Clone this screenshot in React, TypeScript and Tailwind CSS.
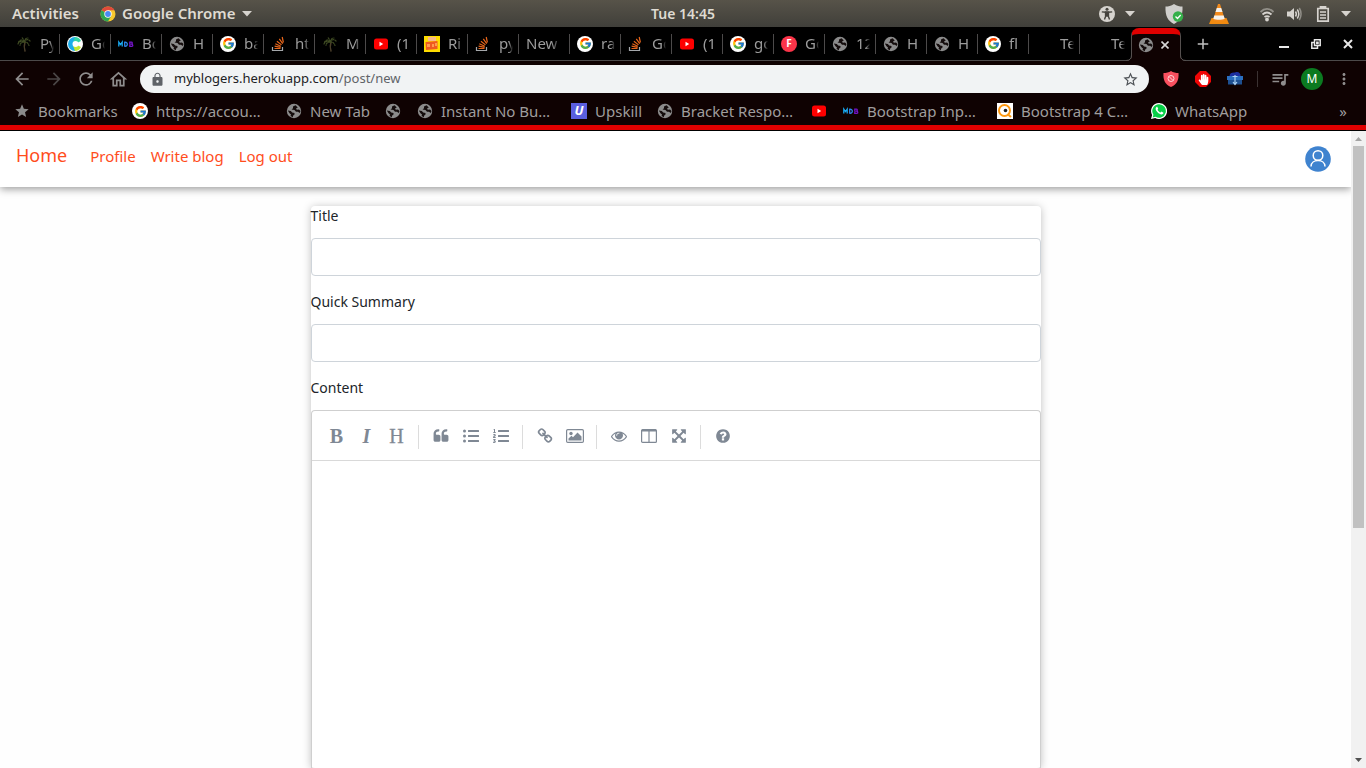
import type { ReactNode } from 'react';
import { FcGoogle } from 'react-icons/fc';
import { FaListUl, FaListOl, FaHandPaper } from 'react-icons/fa';
import {
  MdArrowBack, MdArrowForward, MdRefresh, MdOutlineHome, MdLock, MdStarBorder, MdStar,
  MdMoreVert, MdAdd, MdQueueMusic,
} from 'react-icons/md';

const Globe = () => (
  <svg viewBox="0 0 16 16" className="size-4">
    <circle cx="8" cy="8" r="7.200" fill="#8b8b8b" />
    <path d="M9.500 2.200L7 3.500v1.700L5.500 6.500l3 .5 1.500 1.800h2l1.600 1.200 1-2-1.600-1.500-2.200.3-.8-1.300 1.800-1z" fill="#140c0c" />
    <path d="M1.800 7.500l3 .5 1.400 1.500 2.300.4v1.600L7 12.700v1.500L4.500 13l.5-1.500-1.500-1.300z" fill="#140c0c" />
  </svg>
);

const Google = () => (
  <span className="flex size-4 items-center justify-center rounded-full bg-white">
    <FcGoogle className="size-[13px]" />
  </span>
);

const Palm = () => (
  <svg viewBox="0 0 16 16" className="size-4" fill="none" stroke="#3e4a22" strokeWidth="1.2" strokeLinecap="round">
    <path d="M9 15c-1-3-1-6 0-9" stroke="#4b3f2a" strokeWidth="1.5" />
    <path d="M8 6C6 3 4 4 2.500 6M8 6C5 6 4 8 4 9.500M8 6c2-3 4-3 6-1M8 6c3 0 4 1 5 3.500M8 6C7 3 7 2 5.500 1.500M8 6c1-3 2-4 4-4M8 6C5 5 3 5 2 8" strokeDasharray="1.600 1.300" />
  </svg>
);

const StackOverflow = () => (
  <svg viewBox="0 0 16 16" className="size-4" fill="none" strokeWidth="1.2">
    <path d="M1.500 11V14.500H11.500V11" stroke="#a5a8ab" />
    <path d="M3.500 12.500h6M3.600 10.200l6 1.100M4.300 7.700l5.500 2.500M5.900 5.200l4.600 3.700M8.300 2.900l3.400 4.800M11.200 1l1.200 5.500" stroke="#e8661b" />
  </svg>
);

const YouTube = () => (
  <svg viewBox="0 0 16 16" className="size-4">
    <rect x="1" y="2.500" width="14" height="11" rx="2.500" fill="#f00" />
    <path d="M6.500 5.800v4.400L10.200 8z" fill="#fff" />
  </svg>
);

const Mdb = () => (
  <svg viewBox="0 0 16 16" className="size-4" fill="none" strokeWidth="1.300">
    <path d="M.800 10.500V6l1.700 2.500L4.200 6v4.500" stroke="#18a8f0" />
    <path d="M6.700 6.200v4c3.500 .5 3.500-4.500 0-4z" stroke="#2a86e8" />
    <path d="M11.800 6.200v4.200h2c1.500-.4 1.200-2-.2-2.200 1-.4 1-2-.3-2z" stroke="#7414c8" />
  </svg>
);

const Swirl = () => (
  <svg viewBox="0 0 16 16" className="size-4">
    <circle cx="8" cy="8" r="8" fill="#fff" />
    <path d="M8 1a7 7 0 0 0 0 14z" fill="#1badea" />
    <path d="M8 1a7 7 0 0 1 6 4l-3 1.500H6z" fill="#35d6a4" />
    <path d="M8 15a7 7 0 0 0 6-4l-3-1.500H6z" fill="#c2e830" />
    <circle cx="8.500" cy="8" r="3" fill="#fff" />
  </svg>
);

const Movie = () => (
  <svg viewBox="0 0 16 16" className="size-4">
    <path d="M0 0h16v16H0z" fill="#ffdc00" />
    <path d="M4 1h8v4H4z" fill="#f6b98b" />
    <path d="M1.500 6l12-1v8L2 14z" fill="#ef5a20" />
    <path d="M3 8h3v3H3zM8 8h2v3H8zM11 7h2v3h-2z" fill="#ff9a50" />
  </svg>
);

const LetterF = () => (
  <span className="flex size-4 items-center justify-center rounded-full bg-[#fb3449] text-[10px] font-bold text-white">F</span>
);

const LetterU = () => (
  <span className="flex size-4 items-center justify-center bg-[#5a5fe0] text-[13px] font-bold italic text-white">U</span>
);

const QIcon = () => (
  <svg viewBox="0 0 16 16" className="size-4">
    <path d="M0 0h16v16H0z" fill="#fff" />
    <circle cx="7.500" cy="7.500" r="5.500" fill="none" stroke="#ff9810" strokeWidth="2" />
    <path d="M10.500 11l3.500 3" stroke="#ff9810" strokeWidth="2.200" />
    <circle cx="8.500" cy="7.500" r="1.800" fill="#222" />
  </svg>
);

const WhatsApp = () => (
  <svg viewBox="0 0 16 16" className="size-4">
    <path d="M8 0a8 8 0 1 1-3.800 15L0 16l1.100-4A8 8 0 0 1 8 0z" fill="#fff" />
    <path d="M8 1.200a6.800 6.800 0 1 1-3.500 12.600L1.700 14.400l.7-2.700A6.800 6.800 0 0 1 8 1.200z" fill="#08d048" />
    <path d="M5.500 4c-1.500 1-1 3.200 1 5.200s4.300 3.100 5.700 1.400c.4-.6.3-1-.2-1.200l-1.500-.8-1 1C8.400 9.200 7.200 8.200 6.500 6.700l.7-.9-.7-1.600c-.2-.4-.6-.4-1-.2z" fill="#fff" />
  </svg>
);

const Chrome = () => (
  <svg viewBox="0 0 16 16" className="size-4">
    <circle cx="8" cy="8" r="7.500" fill="#f7c92e" />
    <path d="M8 8L1.500 4.250A7.500 7.500 0 0 1 14.500 4.250H8z" fill="#e04a3a" />
    <path d="M8 8L1.500 4.250A7.500 7.500 0 0 0 8 15.500L11.200 9.900z" fill="#2fa552" />
    <circle cx="8" cy="8" r="3.700" fill="#fff" />
    <circle cx="8" cy="8" r="2.900" fill="#4a8af4" />
  </svg>
);

const Caret = () => (
  <svg viewBox="0 0 10 6" className="h-[6px] w-[10px]" fill="#d6d3ce"><path d="M0 0h10L5 5.500z" /></svg>
);

type Tab = { icon?: ReactNode; text: string; bare?: boolean };
const tabs: Tab[] = [
  { icon: <Palm />, text: 'Py' },
  { icon: <Swirl />, text: 'Go' },
  { icon: <Mdb />, text: 'Bo' },
  { icon: <Globe />, text: 'H' },
  { icon: <Google />, text: 'ba' },
  { icon: <StackOverflow />, text: 'ht' },
  { icon: <Palm />, text: 'M' },
  { icon: <YouTube />, text: '(1' },
  { icon: <Movie />, text: 'Ri' },
  { icon: <StackOverflow />, text: 'py' },
  { text: 'New', bare: true },
  { icon: <Google />, text: 'ra' },
  { icon: <StackOverflow />, text: 'Go' },
  { icon: <YouTube />, text: '(1' },
  { icon: <Google />, text: 'go' },
  { icon: <LetterF />, text: 'Go' },
  { icon: <Globe />, text: '12' },
  { icon: <Globe />, text: 'H' },
  { icon: <Globe />, text: 'H' },
  { icon: <Google />, text: 'fl' },
  { text: 'Te' },
  { text: 'Te' },
];

const bookmarks: { icon: ReactNode; text: string; width: string }[] = [
  { icon: <MdStar className="size-4 text-[#8b8b8b]" />, text: 'Bookmarks', width: 'w-[118px]' },
  { icon: <Google />, text: 'https://accou…', width: 'w-[154px]' },
  { icon: <Globe />, text: 'New Tab', width: 'w-[99px]' },
  { icon: <Globe />, text: '', width: 'w-8' },
  { icon: <Globe />, text: 'Instant No Bu…', width: 'w-[154px]' },
  { icon: <LetterU />, text: 'Upskill', width: 'w-[86px]' },
  { icon: <Globe />, text: 'Bracket Respo…', width: 'w-[154px]' },
  { icon: <YouTube />, text: '', width: 'w-8' },
  { icon: <Mdb />, text: 'Bootstrap Inp…', width: 'w-[154px]' },
  { icon: <QIcon />, text: 'Bootstrap 4 C…', width: 'w-[154px]' },
  { icon: <WhatsApp />, text: 'WhatsApp', width: 'w-[118px]' },
];

function SystemBar() {
  return (
    <header className="grid h-[27px] shrink-0 grid-cols-[1fr_auto_1fr] items-center bg-linear-to-b from-[#575349] to-[#403f3a] text-[15px] font-semibold text-[#dfdbd2]">
      <div className="flex items-center pl-3">
        <button className="w-[88px] text-left">Activities</button>
        <button className="flex items-center gap-[6px]">
          <Chrome />
          <span>Google Chrome</span>
          <Caret />
        </button>
      </div>
      <time className="text-[14px]">Tue 14:45</time>
      <div className="flex items-center justify-end pr-[15px]">
        <svg viewBox="0 0 16 16" className="size-4">
          <circle cx="8" cy="8" r="8" fill="#d6d3ce" />
          <circle cx="8" cy="3.300" r="1.500" fill="#45433d" />
          <path d="M2.800 5.800l4 .5h2.400l4-.5M6.800 6.300v3.500L5.500 13.500M9.200 6.300v3.500l1.300 3.700M6.500 6h3v4h-3z" stroke="#45433d" strokeWidth="1.300" fill="#45433d" />
        </svg>
        <span className="ml-[10px]"><Caret /></span>
        <svg viewBox="0 0 20 20" className="ml-[29px] size-5">
          <path d="M10 0c3 2 5.500 2.500 8.500 2.500C19 12 16 17 10 20 4 17 1 12 1.500 2.500 4.500 2.500 7 2 10 0z" fill="#d0cfcc" />
          <circle cx="14" cy="12.500" r="5.200" fill="#36b04a" />
          <path d="M11.500 12.500l2 2 3.200-3.500" fill="none" stroke="#fff" strokeWidth="1.300" />
        </svg>
        <svg viewBox="0 0 20 22" className="ml-[25px] h-[22px] w-5">
          <path d="M2.500 15h15L20 21H0z" fill="#f08a10" />
          <path d="M9 1h2l5 16c-3 2-9 2-12 0z" fill="#f28a1c" />
          <path d="M7.800 5h4.400l1.300 4h-7zM5.300 12.500h9.400l1 3.200c-3 1.500-8.400 1.500-11.400 0z" fill="#f4f1ec" />
        </svg>
        <svg viewBox="0 0 16 16" className="ml-[30px] size-4" fill="none" stroke="#d6d3ce" strokeWidth="1.800">
          <path d="M1.500 6c4-4 9-4 13 0" opacity=".5" />
          <path d="M3.500 8.500c3-2.700 6-2.700 9 0M5.500 11c2-1.500 3-1.500 5 0" />
          <circle cx="8" cy="13.500" r="1" fill="#d6d3ce" />
        </svg>
        <svg viewBox="0 0 16 16" className="ml-[11px] size-4" fill="none" stroke="#d6d3ce" strokeWidth="1.500">
          <path d="M1 5.500h3L8 2v12l-4-3.500H1z" fill="#d6d3ce" stroke="none" />
          <path d="M9.500 5.500q1.700 2.500 0 5M11.300 3.500q3 4.500 0 9" />
          <path d="M13.300 2q3.500 6 0 12" opacity=".5" />
        </svg>
        <svg viewBox="0 0 14 16" className="ml-[14px] h-4 w-[14px]" fill="none" stroke="#d6d3ce" strokeWidth="1.700">
          <path d="M4.500 2V.800h5V2M1.800 2.500h10.400v12.700H1.800zM4 6h6M4 9h6M4 12h6" />
        </svg>
        <span className="ml-[11px]"><Caret /></span>
      </div>
    </header>
  );
}

function TabStrip() {
  return (
    <div className="flex h-[34px] shrink-0 bg-black">
      <div className="w-[9px] border-b border-[#4c4a4a]" />
      {tabs.map((tab, i) => (
        <button key={i} className="flex w-[51px] items-center border-b border-[#4c4a4a]">
          <span className={'flex h-5 w-full items-center pl-[7px] text-[15px] text-[#9c9c9c] ' + (i < 21 ? 'border-r border-[#4c4a4a]' : '')}>
            {!tab.bare && <span className="mr-2 flex size-4 shrink-0 items-center justify-center">{tab.icon}</span>}
            <span className={(tab.bare ? 'w-9' : 'w-[14px]') + ' overflow-hidden whitespace-nowrap text-left mask-r-from-70% mask-r-to-100%'}>{tab.text}</span>
          </span>
        </button>
      ))}
      <div className="relative mt-px flex w-[50px] items-center rounded-t-lg border border-b-0 border-t-[6px] border-[#55504f] border-t-[#e00000] bg-[#0f0202] pb-[6px] pl-[6px]">
        <svg viewBox="0 0 6 6" className="absolute -left-[6px] bottom-0 size-[6px]">
          <path d="M6 0v6H0q6 0 6-6z" fill="#0f0202" /><path d="M0 5.500Q5.500 5.500 5.500 0" fill="none" stroke="#55504f" />
        </svg>
        <svg viewBox="0 0 6 6" className="absolute -right-[6px] bottom-0 size-[6px]">
          <path d="M0 0v6h6Q0 6 0 0z" fill="#0f0202" /><path d="M6 5.500Q.5 5.500 .5 0" fill="none" stroke="#55504f" />
        </svg>
        <Globe />
        <button aria-label="Close tab" className="ml-[7px]">
          <svg viewBox="0 0 8 8" className="size-2" stroke="#d8d8d8" strokeWidth="1.600"><path d="M.5 .5l7 7M7.500 .5l-7 7" /></svg>
        </button>
      </div>
      <div className="flex flex-1 items-center border-b border-[#4c4a4a] pl-[13px]">
        <button aria-label="New tab"><MdAdd className="size-[18px] text-[#c0c0c0]" /></button>
        <div className="ml-auto flex">
          <button aria-label="Minimize" className="flex w-8 justify-center pt-[7px]"><span className="h-[2px] w-[10px] bg-[#e8e8e8]" /></button>
          <button aria-label="Restore" className="flex w-8 items-center justify-center">
            <svg viewBox="0 0 10 10" className="size-[10px]" fill="none" stroke="#e8e8e8" strokeWidth="1.500">
              <path d="M3.500.800h5.700v5.700H3.500zM3.500 3.500H.800v5.700h5.700V6.500M5.800 3.200h1.200v1.200H5.800z" />
            </svg>
          </button>
          <button aria-label="Close" className="mr-[2px] flex w-8 items-center justify-center">
            <svg viewBox="0 0 10 10" className="size-[10px]" stroke="#e8e8e8" strokeWidth="2"><path d="M1 1l8 8M9 1L1 9" /></svg>
          </button>
        </div>
      </div>
    </div>
  );
}

const tool = 'flex h-8 w-8 items-center justify-center';

function AddressRow() {
  return (
    <div className="flex h-9 shrink-0 items-center bg-[#0f0202] px-[6px] text-[#8f8d8d]">
      <button aria-label="Back" className={tool}><MdArrowBack className="size-[20px]" /></button>
      <button aria-label="Forward" className={tool}><MdArrowForward className="size-[20px] text-[#4b4646]" /></button>
      <button aria-label="Reload" className={tool}><MdRefresh className="size-[20px]" /></button>
      <button aria-label="Home page" className={tool}><MdOutlineHome className="size-[21px]" /></button>
      <div className="mx-[6px] flex h-7 flex-1 items-center rounded-full bg-[#f1f3f4] px-[10px] text-[13px]">
        <MdLock className="mr-[9px] size-[15px] text-[#5f6368]" />
        <span className="flex-1 text-[#5f6368]"><span className="text-[#202124]">myblogers.herokuapp.com</span>/post/new</span>
        <button aria-label="Bookmark this page"><MdStarBorder className="size-[17px] text-[#4d5156]" /></button>
      </div>
      <button aria-label="Ad guard" className={tool}>
        <svg viewBox="0 0 16 16" className="size-4">
          <path d="M8 0c2 1.500 5 2 7.500 2C16 9 14 13.500 8 16 2 13.500 0 9 .500 2 3 2 6 1.500 8 0z" fill="#f9505f" />
          <circle cx="8" cy="7.500" r="3" fill="none" stroke="#ffd6d9" /><path d="M6 5.500l4 4" stroke="#ffd6d9" />
        </svg>
      </button>
      <button aria-label="Ad blocker" className={tool}>
        <span className="relative flex size-4 items-center justify-center">
          <svg viewBox="0 0 16 16" className="absolute size-4"><path d="M5 0h6l5 5v6l-5 5H5l-5-5V5z" fill="#ef0505" /></svg>
          <FaHandPaper className="relative size-[11px] text-white" />
        </span>
      </button>
      <button aria-label="Downloads" className={tool}>
        <svg viewBox="0 0 16 16" className="size-4">
          <path d="M2.500 5c0-3 3-4 5.500-3.500C11 0 14 2 13.500 5z" fill="#1c2fa0" />
          <path d="M0 5h16v4H0z" fill="#2a6fc0" /><path d="M1 9h14v4.500H1z" fill="#1d4f90" />
          <path d="M8 4v9M6 11l2 2.500 2-2.500M5.500 5.500h5" fill="none" stroke="#a8d0f4" strokeWidth="1.200" />
        </svg>
      </button>
      <span className="mx-[6px] h-4 w-px bg-[#3b3232]" />
      <button aria-label="Media controls" className={tool}><MdQueueMusic className="size-[20px]" /></button>
      <button aria-label="Account" className="mx-[5px] flex size-[22px] items-center justify-center rounded-full bg-[#0b7a20] text-[12px] text-white">M</button>
      <button aria-label="Menu" className={tool}><MdMoreVert className="size-[18px]" /></button>
    </div>
  );
}

function BookmarksBar() {
  return (
    <div className="flex h-7 shrink-0 items-center bg-[#0f0202] pl-[14px] text-[15px] text-[#9f9d9d]">
      {bookmarks.map((b, i) => (
        <a key={i} href="#" aria-label={b.text || 'Bookmark'} className={'flex shrink-0 items-center gap-2 whitespace-nowrap ' + b.width}>
          <span className="flex size-4 shrink-0 items-center justify-center">{b.icon}</span>
          {b.text}
        </a>
      ))}
      <button aria-label="More bookmarks" className="ml-auto mr-[19px] leading-5">»</button>
    </div>
  );
}

const QUOTE = 'M832 960v384q0 80-56 136t-136 56h-384q-80 0-136-56t-56-136v-704q0-104 40.5-198.5t109.5-163.5 163.5-109.5 198.5-40.5h64q26 0 45 19t19 45v128q0 26-19 45t-45 19h-64q-106 0-181 75t-75 181v32q0 40 28 68t68 28h224q80 0 136 56t56 136zm896 0v384q0 80-56 136t-136 56h-384q-80 0-136-56t-56-136v-704q0-104 40.5-198.5t109.5-163.5 163.5-109.5 198.5-40.5h64q26 0 45 19t19 45v128q0 26-19 45t-45 19h-64q-106 0-181 75t-75 181v32q0 40 28 68t68 28h224q80 0 136 56t56 136z';
const LINK = 'M1520 1216q0-40-28-68l-208-208q-28-28-68-28-42 0-72 32 3 3 19 18.5t21.5 21.5 15 19 13 25.5 3.5 27.5q0 40-28 68t-68 28q-15 0-27.5-3.5t-25.5-13-19-15-21.5-21.5-18.5-19q-33 31-33 73 0 40 28 68l206 207q27 27 68 27 40 0 68-26l147-146q28-28 28-67zm-703-705q0-40-28-68l-206-207q-28-28-68-28-39 0-68 27l-147 146q-28 28-28 67 0 40 28 68l208 208q27 27 68 27 42 0 72-31-3-3-19-18.5t-21.5-21.5-15-19-13-25.5-3.5-27.5q0-40 28-68t68-28q15 0 27.5 3.5t25.5 13 19 15 21.5 21.5 18.5 19q33-31 33-73zm895 705q0 120-85 203l-147 146q-83 83-203 83-121 0-204-85l-206-207q-83-83-83-203 0-123 88-209l-88-88q-86 88-208 88-120 0-204-84l-208-208q-84-84-84-204t85-203l147-146q83-83 203-83 121 0 204 85l206 207q83 83 83 203 0 123-88 209l88 88q86-88 208-88 120 0 204 84l208 208q84 84 84 204z';
const EYE = 'M1664 960q-152-236-381-353 61 104 61 225 0 185-131.5 316.5t-316.5 131.5-316.5-131.5-131.5-316.5q0-121 61-225-229 117-381 353 133 205 333.5 326.5t434.5 121.5 434.5-121.5 333.5-326.5zm-720-384q0-20-14-34t-34-14q-125 0-214.5 89.5t-89.5 214.5q0 20 14 34t34 14 34-14 14-34q0-86 61-147t147-61q20 0 34-14t14-34zm848 384q0 34-20 69-140 230-376.5 368.5t-499.5 138.5-499.5-139-376.5-368q-20-35-20-69t20-69q140-229 376.5-368t499.5-139 499.5 139 376.5 368q20 35 20 69z';
const ARROWS = 'M1411 541l-355 355 355 355 144-144q29-31 70-14 39 17 39 59v448q0 26-19 45t-45 19h-448q-42 0-59-40-17-39 14-69l144-144-355-355-355 355 144 144q31 30 14 69-17 40-59 40h-448q-26 0-45-19t-19-45v-448q0-42 40-59 39-17 69 14l144 144 355-355-355-355-144 144q-19 19-45 19-12 0-24-5-40-17-40-59v-448q0-26 19-45t45-19h448q42 0 59 40 17 39-14 69l-144 144 355 355 355-355-144-144q-31-30-14-69 17-40 59-40h448q26 0 45 19t19 45v448q0 42-39 59-13 5-25 5-26 0-45-19z';
const HELP = 'M1024 1376v-192q0-14-9-23t-23-9h-192q-14 0-23 9t-9 23v192q0 14 9 23t23 9h192q14 0 23-9t9-23zm256-672q0-88-55.5-163t-138.5-116-170-41q-243 0-371 213-15 24 8 42l132 100q7 6 19 6 16 0 25-12 53-68 86-92 34-24 86-24 48 0 85.5 26t37.5 59q0 38-20 61t-68 45q-63 28-115.5 86.5t-52.5 125.5v36q0 14 9 23t23 9h192q14 0 23-9t9-23q0-19 21.500-49.500t54.500-49.500q32-18 49-28.500t46-35 44.500-48 28-60.500 12.500-81zm384 192q0 209-103 385.500t-279.500 279.500-385.500 103-385.500-103-279.500-279.500-103-385.500 103-385.500 279.500-279.500 385.500-103 385.500 103 279.500 279.500 103 385.500z';

const Glyph = ({ d }: { d: string }) => (
  <svg viewBox="0 0 1792 1792" className="size-4" fill="currentColor"><path d={d} /></svg>
);

const serif = "font-['Liberation_Serif',serif] text-[20px] leading-none";

const groups: { label: string; icon: ReactNode }[][] = [
  [
    { label: 'Bold', icon: <span className={serif + ' font-bold'}>B</span> },
    { label: 'Italic', icon: <span className={serif + ' font-bold italic'}>I</span> },
    { label: 'Heading', icon: <span className={serif + ' [-webkit-text-stroke:0.3px]'}>H</span> },
  ],
  [
    { label: 'Quote', icon: <Glyph d={QUOTE} /> },
    { label: 'Generic List', icon: <FaListUl className="size-4" /> },
    { label: 'Numbered List', icon: <FaListOl className="size-4" /> },
  ],
  [
    { label: 'Create Link', icon: <Glyph d={LINK} /> },
    {
      label: 'Insert Image',
      icon: (
        <svg viewBox="0 0 18 14" className="h-[14px] w-[18px]" fill="currentColor">
          <rect x=".6" y=".6" width="16.800" height="12.800" rx="1.200" fill="none" stroke="currentColor" strokeWidth="1.200" />
          <circle cx="5" cy="4.500" r="1.700" />
          <path d="M2.500 11.500V9.500L5.500 6.800 7 8.200 11.500 3.500 15.500 7.500v4z" />
        </svg>
      ),
    },
  ],
  [
    { label: 'Toggle Preview', icon: <Glyph d={EYE} /> },
    {
      label: 'Toggle Side by Side',
      icon: (
        <svg viewBox="0 0 16 14" className="h-[14px] w-4" fill="none" stroke="currentColor" strokeWidth="1.200">
          <rect x=".6" y=".6" width="14.800" height="12.800" rx="1" />
          <path d="M8 1v12" /><path d="M1 1.500h14" strokeWidth="2" />
        </svg>
      ),
    },
    { label: 'Toggle Fullscreen', icon: <Glyph d={ARROWS} /> },
  ],
  [{ label: 'Markdown Guide', icon: <Glyph d={HELP} /> }],
];

function Field({ id, label }: { id: string; label: string }) {
  return (
    <div className="mb-4">
      <label htmlFor={id} className="mb-2 block h-6 leading-5">{label}</label>
      <input id={id} type="text" className="block h-[38px] w-full rounded border border-[#ced4da] bg-white px-3 outline-none" />
    </div>
  );
}

function Page() {
  return (
    <div className="flex min-w-0 flex-1 flex-col overflow-hidden bg-[#fefefe] font-['Noto_Sans',sans-serif] text-[14px] text-[#212529]">
      <nav className="flex h-14 shrink-0 items-center bg-white px-4 text-[15px] text-[#ff4d1c] shadow-[0_2px_8px_rgba(0,0,0,0.4)]">
        <div className="flex items-baseline gap-[15px] pb-2">
          <a href="#" className="mr-2 text-[18px]">Home</a>
          <a href="#">Profile</a>
          <a href="#">Write blog</a>
          <a href="#">Log out</a>
        </div>
        <a href="#" aria-label="My account" className="ml-auto mr-1">
          <svg viewBox="0 0 26 26" className="size-[26px]" fill="none" stroke="#fff" strokeWidth="1.500">
            <circle cx="13" cy="13" r="12.800" fill="#3f83cf" stroke="none" />
            <circle cx="13" cy="9.500" r="4.800" /><path d="M6 20.500c0-8 14-8 14 0" />
          </svg>
        </a>
      </nav>
      <form className="mx-auto mt-[19px] flex w-full max-w-[730px] flex-1 flex-col rounded bg-white shadow-[0_1px_8px_rgba(0,0,0,0.25)]">
        <Field id="title" label="Title" />
        <Field id="summary" label="Quick Summary" />
        <label htmlFor="content" className="mb-2 block h-6 leading-5">Content</label>
        <div className="flex flex-1 flex-col rounded-t border border-b-0 border-[#cfcfcf]">
          <div className="flex items-center border-b border-[#d9d9d9] px-[10px] pb-[9px] pt-[10px] text-[#7f8894]">
            {groups.map((group, i) => (
              <div key={i} className="flex items-center">
                {i > 0 && <span className="mx-[6px] mt-[2px] h-6 w-[2px] border-l border-[#dcdcdc]" />}
                {group.map((b) => (
                  <button key={b.label} type="button" aria-label={b.label} className="flex size-[30px] items-center justify-center">{b.icon}</button>
                ))}
              </div>
            ))}
          </div>
          <textarea id="content" className="w-full flex-1 resize-none p-3 outline-none" />
        </div>
      </form>
    </div>
  );
}

export default function App() {
  return (
    <div className="flex h-screen flex-col overflow-hidden font-['Noto_Sans',sans-serif]">
      <SystemBar />
      <TabStrip />
      <AddressRow />
      <BookmarksBar />
      <div className="h-[6px] shrink-0 border-b border-black bg-[#e00000]" />
      <main className="flex min-h-0 flex-1">
        <Page />
        <div className="flex w-[15px] shrink-0 flex-col items-center bg-[#f1f1f1]">
          <svg viewBox="0 0 15 15" className="h-[15px] w-[15px] shrink-0"><path d="M4 10h7L7.500 6z" fill="#a3a3a3" /></svg>
          <div className="flex w-full flex-1 flex-col items-center"><div className="h-[63%] w-[11px] bg-[#c1c1c1]" /></div>
          <svg viewBox="0 0 15 15" className="h-[15px] w-[15px] shrink-0"><path d="M4 5h7L7.500 9z" fill="#505050" /></svg>
        </div>
      </main>
    </div>
  );
}
